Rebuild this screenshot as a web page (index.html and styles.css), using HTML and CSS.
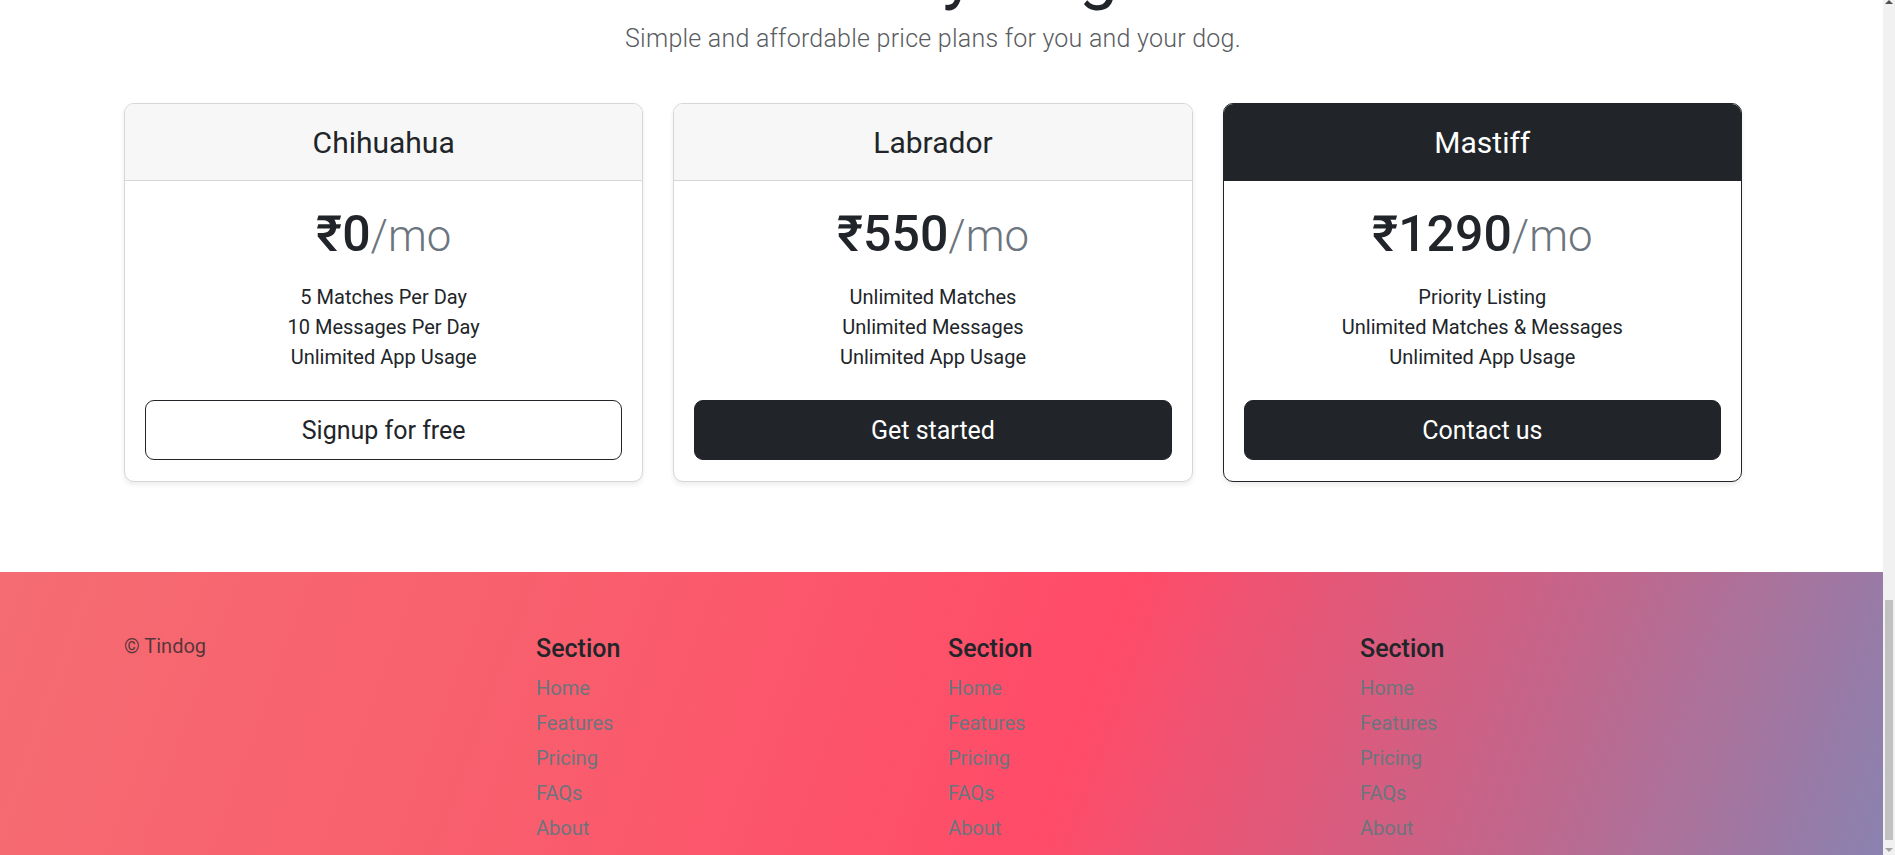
FILE: index.html
```html
<!DOCTYPE html>
<html lang="en">
<head>
<meta charset="utf-8">
<title>Tindog – Pricing</title>
<link rel="stylesheet" href="styles.css">
</head>
<body>
<div class="page">
  <section class="pricing">
    <div class="container">
      <div class="pricing-header">
        <h1 class="pricing-title">A Plan for Every Dog's Needs</h1>
        <p class="pricing-lead">Simple and affordable price plans for you and your dog.</p>
      </div>
      <div class="card-grid">
        <div class="card">
          <div class="card-header"><h4 class="plan-name">Chihuahua</h4></div>
          <div class="card-body">
            <h1 class="price">₹0<small class="per">/mo</small></h1>
            <ul class="features">
              <li>5 Matches Per Day</li>
              <li>10 Messages Per Day</li>
              <li>Unlimited App Usage</li>
            </ul>
            <button class="btn btn-outline" type="button">Signup for free</button>
          </div>
        </div>
        <div class="card">
          <div class="card-header"><h4 class="plan-name">Labrador</h4></div>
          <div class="card-body">
            <h1 class="price">₹550<small class="per">/mo</small></h1>
            <ul class="features">
              <li>Unlimited Matches</li>
              <li>Unlimited Messages</li>
              <li>Unlimited App Usage</li>
            </ul>
            <button class="btn btn-dark" type="button">Get started</button>
          </div>
        </div>
        <div class="card card-dark">
          <div class="card-header"><h4 class="plan-name">Mastiff</h4></div>
          <div class="card-body">
            <h1 class="price">₹1290<small class="per">/mo</small></h1>
            <ul class="features">
              <li>Priority Listing</li>
              <li>Unlimited Matches &amp; Messages</li>
              <li>Unlimited App Usage</li>
            </ul>
            <button class="btn btn-dark" type="button">Contact us</button>
          </div>
        </div>
      </div>
    </div>
  </section>

  <footer class="footer">
    <div class="container">
      <div class="footer-grid">
        <div class="footer-col">
          <small class="copyright">© Tindog</small>
        </div>
        <div class="footer-col">
          <h5 class="footer-heading">Section</h5>
          <ul class="footer-links">
            <li><a href="#">Home</a></li>
            <li><a href="#">Features</a></li>
            <li><a href="#">Pricing</a></li>
            <li><a href="#">FAQs</a></li>
            <li><a href="#">About</a></li>
          </ul>
        </div>
        <div class="footer-col">
          <h5 class="footer-heading">Section</h5>
          <ul class="footer-links">
            <li><a href="#">Home</a></li>
            <li><a href="#">Features</a></li>
            <li><a href="#">Pricing</a></li>
            <li><a href="#">FAQs</a></li>
            <li><a href="#">About</a></li>
          </ul>
        </div>
        <div class="footer-col">
          <h5 class="footer-heading">Section</h5>
          <ul class="footer-links">
            <li><a href="#">Home</a></li>
            <li><a href="#">Features</a></li>
            <li><a href="#">Pricing</a></li>
            <li><a href="#">FAQs</a></li>
            <li><a href="#">About</a></li>
          </ul>
        </div>
      </div>
    </div>
  </footer>
</div>

<div class="scrollbar" aria-hidden="true">
  <span class="scroll-arrow scroll-arrow-up"></span>
  <span class="scroll-thumb"></span>
  <span class="scroll-arrow scroll-arrow-down"></span>
</div>
</body>
</html>
```

FILE: styles.css
```css
html, body {
  margin: 0;
  padding: 0;
}

body {
  width: 1895px;
  height: 855px;
  overflow: hidden;
  background: #fff;
  color: #212529;
  font-family: Roboto, "Noto Sans", sans-serif;
  font-size: 20px;
  line-height: 1.5;
}

.page {
  width: 1883px;
}

.container {
  width: 1648px;
  box-sizing: border-box;
  padding: 0 15px;
  margin-left: 109px;
}

/* header */
.pricing-header {
  text-align: center;
}

.pricing-title {
  margin: -70px 0 5px;
  font-size: 70px;
  line-height: 84px;
  font-weight: 400;
}

.pricing-lead {
  margin: 0 0 45.5px;
  padding-top: 0.5px;
  font-size: 25px;
  line-height: 37.5px;
  font-weight: 300;
  letter-spacing: 0.24px;
  color: #595c5f;
}

/* cards */
.card-grid {
  display: grid;
  grid-template-columns: repeat(3, 1fr);
  column-gap: 30px;
  text-align: center;
}

.card {
  border: 1px solid #d6d6d6;
  border-radius: 10px;
  box-shadow: 0 2.5px 5px rgba(0, 0, 0, 0.075);
  overflow: hidden;
  background: #fff;
}

.card-header {
  padding: 21px 20px 19px;
  background: #f7f7f7;
  border-bottom: 1px solid #d6d6d6;
}

.plan-name {
  margin: 0;
  font-size: 30px;
  line-height: 36px;
  font-weight: 400;
}

.card-dark {
  border-color: #212529;
}

.card-dark .card-header {
  background: #212529;
  border-bottom-color: #212529;
  color: #fff;
}

.card-body {
  padding: 20px 20px 21.5px;
}

.price {
  margin: 0 0 16px;
  padding-top: 3px;
  font-size: 50px;
  line-height: 60px;
  font-weight: 500;
}

.per {
  font-size: 43.75px;
  font-weight: 300;
  color: #6c757d;
}

.features {
  list-style: none;
  margin: 0 0 28.5px;
  padding: 0;
  font-size: 20px;
  line-height: 30px;
}

.btn {
  display: block;
  width: 100%;
  box-sizing: border-box;
  padding: 11px 20px 9px;
  border: 1px solid #212529;
  border-radius: 9px;
  font-family: inherit;
  font-size: 25px;
  line-height: 37.5px;
  font-weight: 400;
  cursor: pointer;
}

.btn-outline {
  background: transparent;
  color: #212529;
}

.btn-dark {
  background: #212529;
  color: #fff;
}

/* footer */
.footer {
  margin-top: 90px;
  height: 285px;
  box-sizing: border-box;
  padding-top: 60px;
  background: linear-gradient(110deg, #f56c72 0%, #f95e6d 30%, #ff4b68 57%, #c4658a 80%, #8a82b0 100%);
}

.footer-grid {
  display: grid;
  grid-template-columns: repeat(4, 1fr);
  column-gap: 30px;
}

.copyright {
  display: block;
  margin-top: -1px;
  font-size: 20px;
  line-height: 30px;
  color: rgba(33, 37, 41, 0.75);
}

.footer-heading {
  margin: 0 0 9px;
  padding-top: 2px;
  font-size: 25px;
  line-height: 30px;
  font-weight: 500;
  color: #212529;
}

.footer-links {
  list-style: none;
  margin: 0;
  padding: 0;
}

.footer-links li {
  margin-bottom: 5px;
  line-height: 30px;
}

.footer-links a {
  color: #6c757d;
  text-decoration: none;
  font-size: 20px;
}

/* fake window scrollbar */
.scrollbar {
  position: fixed;
  top: 0;
  right: 0;
  width: 12px;
  height: 855px;
  background: #f1f1f1;
}

.scroll-thumb {
  position: absolute;
  left: 2px;
  top: 600px;
  width: 8px;
  height: 240px;
  background: #c1c1c1;
}

.scroll-arrow {
  position: absolute;
  left: 2px;
  width: 0;
  height: 0;
  border-left: 4px solid transparent;
  border-right: 4px solid transparent;
}

.scroll-arrow-up {
  top: 0;
  border-bottom: 4px solid #505050;
}

.scroll-arrow-down {
  bottom: 3px;
  border-top: 4px solid #a3a3a3;
}
```
